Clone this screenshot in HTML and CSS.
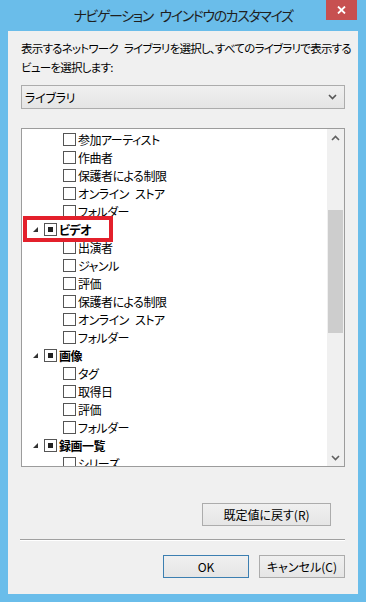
FILE: index.html
```html
<!DOCTYPE html>
<html lang="ja">
<head>
    <meta charset="UTF-8">
    <meta name="viewport" content="width=device-width, initial-scale=1.0">
    <title>ナビゲーション ウインドウのカスタマイズ</title>
    <link rel="stylesheet" href="styles.css">
</head>
<body>
    <div class="window">
        <div class="titlebar">
            <span></span>
            <div class="title">ナビゲーション ウインドウのカスタマイズ</div>
            <button class="close" aria-label="閉じる">
                <svg width="9" height="8" viewBox="0 0 9 8"><path d="M1 0.5 L8 7.5 M8 0.5 L1 7.5" stroke="#fff" stroke-width="1.8"/></svg>
            </button>
        </div>

        <div class="client">
            <p class="intro">表示するネットワーク ライブラリを選択し、すべてのライブラリで表示する<br>ビューを選択します:</p>

            <div class="combo">
                <span>ライブラリ</span>
                <svg width="9" height="6" viewBox="0 0 9 6"><path d="M1 1 L4.5 4.5 L8 1" fill="none" stroke="#555" stroke-width="1.6"/></svg>
            </div>

            <div class="tree">
                <div class="tree-list">
                    <div class="row child"><span class="check"></span>参加アーティスト</div>
                    <div class="row child"><span class="check"></span>作曲者</div>
                    <div class="row child"><span class="check"></span>保護者による制限</div>
                    <div class="row child"><span class="check"></span>オンライン ストア</div>
                    <div class="row child"><span class="check"></span>フォルダー</div>
                    <div class="row parent marked">
                        <svg class="toggle" width="5" height="5" viewBox="0 0 5 5"><polygon points="5,0 5,5 0,5" fill="#333"/></svg>
                        <span class="check on"></span>ビデオ
                    </div>
                    <div class="row child"><span class="check"></span>出演者</div>
                    <div class="row child"><span class="check"></span>ジャンル</div>
                    <div class="row child"><span class="check"></span>評価</div>
                    <div class="row child"><span class="check"></span>保護者による制限</div>
                    <div class="row child"><span class="check"></span>オンライン ストア</div>
                    <div class="row child"><span class="check"></span>フォルダー</div>
                    <div class="row parent">
                        <svg class="toggle" width="5" height="5" viewBox="0 0 5 5"><polygon points="5,0 5,5 0,5" fill="#333"/></svg>
                        <span class="check on"></span>画像
                    </div>
                    <div class="row child"><span class="check"></span>タグ</div>
                    <div class="row child"><span class="check"></span>取得日</div>
                    <div class="row child"><span class="check"></span>評価</div>
                    <div class="row child"><span class="check"></span>フォルダー</div>
                    <div class="row parent">
                        <svg class="toggle" width="5" height="5" viewBox="0 0 5 5"><polygon points="5,0 5,5 0,5" fill="#333"/></svg>
                        <span class="check on"></span>録画一覧
                    </div>
                    <div class="row child"><span class="check"></span>シリーズ</div>
                </div>
                <div class="scrollbar">
                    <div class="arrow">
                        <svg width="9" height="6" viewBox="0 0 9 6"><path d="M1 5 L4.5 1.5 L8 5" fill="none" stroke="#606060" stroke-width="1.6"/></svg>
                    </div>
                    <div class="track"><div class="thumb"></div></div>
                    <div class="arrow">
                        <svg width="9" height="6" viewBox="0 0 9 6"><path d="M1 1 L4.5 4.5 L8 1" fill="none" stroke="#606060" stroke-width="1.6"/></svg>
                    </div>
                </div>
            </div>

            <div class="reset-line">
                <button class="btn reset">既定値に戻す(R)</button>
            </div>

            <hr class="separator">

            <div class="actions">
                <button class="btn default">OK</button>
                <button class="btn">キャンセル(C)</button>
            </div>
        </div>
    </div>
</body>
</html>
```

FILE: styles.css
```css
body {
    margin: 0;
    font-family: "Noto Sans CJK JP", "Noto Sans", sans-serif;
    font-feature-settings: "palt";
    font-size: 12px;
    color: #000;
}

.window {
    width: 366px;
    height: 602px;
    background: #6abdea;
    display: flex;
    flex-direction: column;
}

.titlebar {
    height: 31px;
    display: grid;
    grid-template-columns: 1fr auto 1fr;
    align-items: start;
}

.title {
    font-size: 14px;
    line-height: 31px;
    color: #1f1f1f;
    letter-spacing: -1.4px;
    word-spacing: 5px;
    white-space: nowrap;
}

.close {
    justify-self: end;
    margin-right: 9px;
    width: 31px;
    height: 20px;
    border: none;
    padding: 0;
    background: #c75050;
    display: flex;
    align-items: center;
    justify-content: center;
}

.client {
    margin: 0 8px 8px;
    height: 563px;
    box-sizing: border-box;
    background: #f0f0f0;
    padding: 8px 13px 16px;
    display: flex;
    flex-direction: column;
}

.intro {
    margin: 0;
    font-size: 11.5px;
    line-height: 19px;
    height: 38px;
    letter-spacing: -0.75px;
    word-spacing: 4px;
    white-space: nowrap;
}

.combo {
    margin-top: 8px;
    height: 24px;
    box-sizing: border-box;
    border: 1px solid #acacac;
    background: linear-gradient(#f0f0f0, #e5e5e5);
    display: flex;
    align-items: center;
    justify-content: space-between;
    padding: 0 7px 0 3px;
    letter-spacing: -0.3px;
}

.tree {
    margin-top: 19px;
    height: 339px;
    box-sizing: border-box;
    border: 1px solid #9c9c9c;
    background: #fff;
    display: flex;
    overflow: hidden;
}

.tree-list {
    flex: 1;
    padding-top: 1px;
    letter-spacing: -0.5px;
    word-spacing: 4px;
}

.row {
    height: 18px;
    display: flex;
    align-items: center;
    white-space: nowrap;
}

.row.child {
    padding-left: 41px;
}

.row.parent {
    padding-left: 11px;
    font-weight: bold;
}

.row.marked {
    margin-left: 5px;
    padding-left: 6px;
    width: 82px;
    box-sizing: border-box;
    outline: 4px solid #e3202b;
}

.toggle {
    margin-right: 6px;
}

.check {
    width: 13px;
    height: 13px;
    box-sizing: border-box;
    border: 1px solid #555;
    background: #fff;
    margin-right: 2px;
    display: flex;
    align-items: center;
    justify-content: center;
    flex-shrink: 0;
}

.check.on::after {
    content: "";
    width: 5px;
    height: 5px;
    background: #222;
}

.scrollbar {
    width: 17px;
    background: #f0f0f0;
    display: flex;
    flex-direction: column;
}

.arrow {
    height: 17px;
    display: flex;
    align-items: center;
    justify-content: center;
}

.track {
    flex: 1;
    padding: 64px 1px 0;
}

.thumb {
    height: 123px;
    background: #cdcdcd;
}

.btn {
    font-family: inherit;
    font-feature-settings: "palt";
    font-size: 12px;
    color: #000;
    height: 23px;
    border: 1px solid #acacac;
    background: linear-gradient(#f0f0f0, #e5e5e5);
    padding: 0;
}

.reset-line {
    margin-top: 36px;
    display: flex;
    justify-content: flex-end;
    padding-right: 14px;
}

.reset {
    width: 129px;
}

.separator {
    margin: 13px 0 0 -1px;
    border: none;
    border-top: 1px solid #a0a0a0;
    border-bottom: 1px solid #fff;
    height: 0;
}

.actions {
    margin-top: 14px;
    display: flex;
    justify-content: flex-end;
    gap: 10px;
}

.actions .btn {
    width: 86px;
}

.btn.default {
    border-color: #3c7fb1;
}
```
